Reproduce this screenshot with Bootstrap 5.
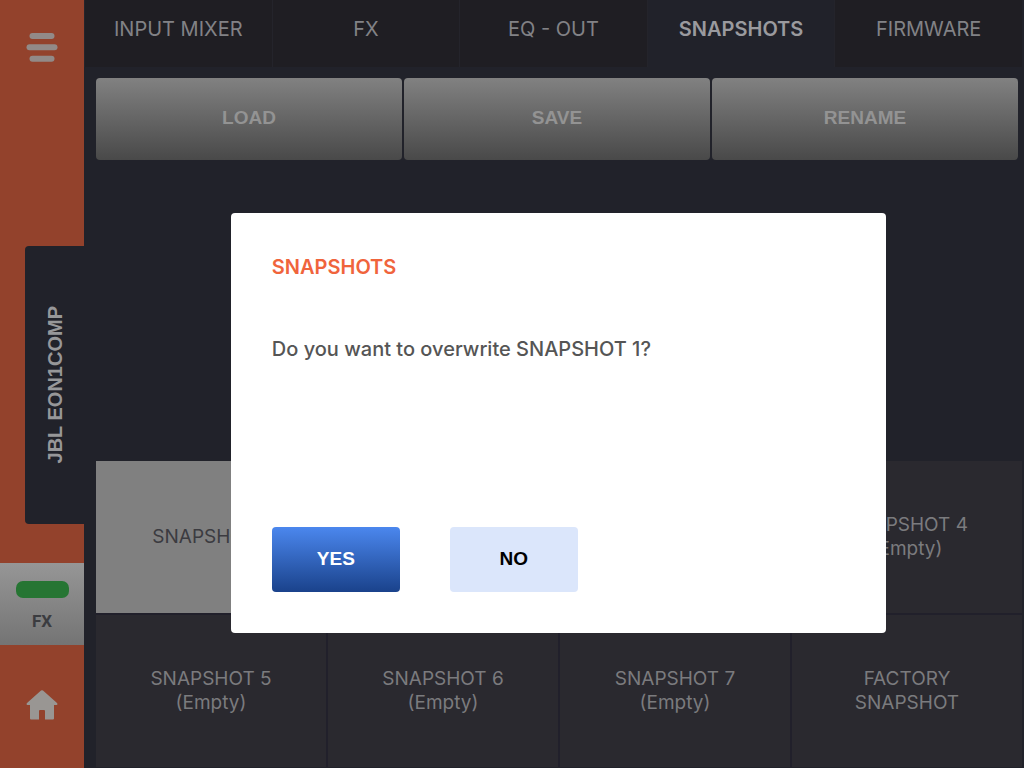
<!DOCTYPE html>
<html lang="en">
<head>
<meta charset="utf-8">
<meta name="viewport" content="width=device-width, initial-scale=1">
<title>JBL EON1COMP - Snapshots</title>
<link href="https://cdn.jsdelivr.net/npm/bootstrap@5.3.0/dist/css/bootstrap.min.css" rel="stylesheet">
<style>
  :root { --ink: #21222a; --rail: #93422c; --muted: #828286; }
  body { font-family: Inter, "Liberation Sans", sans-serif; background: var(--ink); color: var(--muted); font-size: 19px; line-height: 24px; }
  .helv { font-family: "Liberation Sans", Arial, sans-serif; font-weight: 700; font-size: 19px; line-height: 24px; }
  .rail { width: 84px; background: var(--rail); flex: none; }
  .rail-top { flex: 246 1 0; }
  .menu-key { margin: 33px auto 0; }
  .device-tab { flex: 278 1 0; margin-left: 25px; background: var(--ink); border-radius: 4px 0 0 4px; }
  .device-tab span { writing-mode: vertical-rl; transform: rotate(180deg); font-size: 20px; color: #979799; }
  .rail-gap { flex: 39 1 0; }
  .fx-key { flex: 78 1 0; background: linear-gradient(#969696, #747474); font-family: Roboto, sans-serif; font-size: 17px; line-height: 20px; font-weight: 700; color: #3b3c40; gap: 13px; }
  .fx-key .lamp { width: 53px; height: 17px; border-radius: 7px; background: #267533; }
  .rail-home { flex: 119 1 0; }
  .tabs-row { height: 67px; margin-right: 2px; }
  .tabs-row a { flex: 1 1 0; background: #1f1e23; color: var(--muted); text-decoration: none; padding-bottom: 9px; border-left: 1px solid #24242b; font-size: 20px; }
  .tabs-row a.active { background: var(--ink); color: #9a9a9e; font-weight: 600; }
  .actions { gap: 2px; margin: 11px 6px 0 12px; }
  .actions button { flex: 1 1 0; height: 82px; border: 0; border-radius: 4px; background: linear-gradient(#818181, #494949); color: #939393; padding-bottom: 4px; }
  .snaps { display: grid; grid-template-columns: repeat(4, 1fr); gap: 2px; margin: auto 2px 1px 12px; background: #21202b; }
  .snaps button { height: 152px; border: 0; background: #2a292f; color: #7b7b7e; font-size: 19px; }
  .snaps button.chosen { background: #808080; color: #3b3b40; }
  .overlay { padding: 77px 0 0 93px; }
  .ask { width: 64vw; background: #fff; border-radius: 4px; padding: 41px; color: #555; }
  .ask h1 { font-size: 20px; line-height: 26px; font-weight: 600; color: #f0643c; margin-bottom: 56px; }
  .ask p { font-size: 20px; line-height: 26px; font-weight: 500; margin-bottom: 165px; }
  .ask .choices { gap: 50px; }
  .ask button { width: 128px; height: 65px; border: 0; border-radius: 4px; }
  .yes { background: linear-gradient(#4b87ee, #1a428b); color: #fff; }
  .no { background: #dbe6fb; color: #000; }
</style>
</head>
<body>
<div class="d-flex vh-100 overflow-hidden">
  <aside class="rail d-flex flex-column">
    <div class="rail-top d-flex align-items-start">
      <button type="button" class="menu-key btn p-0 border-0 d-block" aria-label="Menu">
        <svg class="d-block" width="32" height="29" viewBox="0 0 32 29" fill="#928a88"><rect x="3.500" width="25" height="6" rx="3"/><rect x="0.500" y="11.300" width="31" height="6" rx="3"/><rect x="3.500" y="22.700" width="25" height="6" rx="3"/></svg>
      </button>
    </div>
    <div class="device-tab d-flex align-items-center justify-content-center"><span class="helv">JBL EON1COMP</span></div>
    <div class="rail-gap"></div>
    <button type="button" class="fx-key border-0 px-0 pb-0 pt-1 d-flex flex-column align-items-center justify-content-center"><span class="lamp"></span>FX</button>
    <div class="rail-home d-flex align-items-center justify-content-center pb-1">
      <a href="#" aria-label="Home"><svg class="d-block" width="32" height="30" viewBox="0 0 32 30"><path fill="#999693" d="M15 .6q1-.8 2 0L31 13q1 1.600-.4 2H28v13.600q0 1-1 1H19V21q0-1-1-1h-4q-1 0-1 1v8.600H5q-1 0-1-1V15H1.400Q0 14.600 1 13Z"/></svg></a>
    </div>
  </aside>
  <main class="flex-grow-1 d-flex flex-column">
    <nav class="tabs-row d-flex">
      <a href="#" class="d-flex align-items-center justify-content-center">INPUT MIXER</a>
      <a href="#" class="d-flex align-items-center justify-content-center">FX</a>
      <a href="#" class="d-flex align-items-center justify-content-center">EQ - OUT</a>
      <a href="#" class="active d-flex align-items-center justify-content-center" aria-current="page">SNAPSHOTS</a>
      <a href="#" class="d-flex align-items-center justify-content-center">FIRMWARE</a>
    </nav>
    <div class="actions d-flex">
      <button type="button" class="helv">LOAD</button>
      <button type="button" class="helv">SAVE</button>
      <button type="button" class="helv">RENAME</button>
    </div>
    <div class="snaps">
      <button type="button" class="chosen">SNAPSHOT 1</button>
      <button type="button">SNAPSHOT 2<br>(Empty)</button>
      <button type="button">SNAPSHOT 3<br>(Empty)</button>
      <button type="button">SNAPSHOT 4<br>(Empty)</button>
      <button type="button">SNAPSHOT 5<br>(Empty)</button>
      <button type="button">SNAPSHOT 6<br>(Empty)</button>
      <button type="button">SNAPSHOT 7<br>(Empty)</button>
      <button type="button">FACTORY<br>SNAPSHOT</button>
    </div>
  </main>
</div>
<div class="overlay position-fixed top-0 start-0 w-100 h-100 d-flex align-items-center justify-content-center">
  <div class="ask" role="dialog" aria-modal="true" aria-labelledby="ask-title">
    <h1 id="ask-title">SNAPSHOTS</h1>
    <p>Do you want to overwrite SNAPSHOT 1?</p>
    <div class="choices d-flex">
      <button type="button" class="yes helv">YES</button>
      <button type="button" class="no helv">NO</button>
    </div>
  </div>
</div>
<script src="https://cdn.jsdelivr.net/npm/bootstrap@5.3.0/dist/js/bootstrap.bundle.min.js"></script>
</body>
</html>
